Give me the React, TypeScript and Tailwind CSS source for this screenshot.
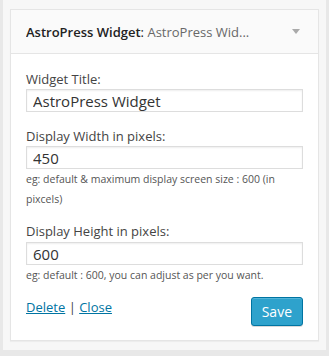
export default function App() {
  return (
    <div className="w-[329px] h-[356px] bg-[#e8e8e8] px-[3px] font-['Open_Sans',sans-serif] text-[#444]">
      <div className="h-[350px] bg-[#f7f7f7] px-[7px] pt-[9px]">
        <div className="border border-[#e5e5e5] bg-white shadow-[0_1px_1px_rgba(0,0,0,0.04)]">
          {/* header */}
          <div className="flex h-[44px] items-center justify-between border-b border-[#e5e5e5] bg-[#fafafa] pl-[15px] pr-[18px]">
            <h3 className="truncate text-[13px] leading-[20px] font-semibold text-[#222]">
              AstroPress Widget<span className="font-normal">:</span>{" "}
              <span className="font-normal text-[#686868]">AstroPress Wid...</span>
            </h3>
            <span className="h-0 w-0 border-x-[4px] border-t-[5px] border-x-transparent border-t-[#aaa]"></span>
          </div>

          {/* body */}
          <div className="px-[15px] pt-[16px] pb-[14px] text-[13px] leading-[18px]">
            <label className="block mb-[1px]">Widget Title:</label>
            <input
              className="block h-[23px] w-full border border-[#ddd] px-[6px] text-[15px] text-[#333] shadow-[inset_0_1px_2px_rgba(0,0,0,0.07)] outline-none"
              defaultValue="AstroPress Widget"
            />

            <label className="block mt-[15px] mb-[1px]">Display Width in pixels:</label>
            <input
              className="block h-[23px] w-full border border-[#ddd] px-[6px] text-[15px] text-[#333] shadow-[inset_0_1px_2px_rgba(0,0,0,0.07)] outline-none"
              defaultValue="450"
            />
            <p className="text-[10.5px] leading-[20px] text-[#555]">
              eg: default &amp; maximum display screen size : 600 (in pixcels)
            </p>

            <label className="block mt-[13px] mb-[2px]">Display Height in pixels:</label>
            <input
              className="block h-[23px] w-full border border-[#ddd] px-[6px] text-[15px] text-[#333] shadow-[inset_0_1px_2px_rgba(0,0,0,0.07)] outline-none"
              defaultValue="600"
            />
            <p className="text-[10.5px] leading-[20px] text-[#555]">
              eg: default : 600, you can adjust as per you want.
            </p>

            <div className="mt-[12px] flex items-start justify-between">
              <div className="pt-[1px] text-[13px] leading-[18px]">
                <a href="#" className="text-[#0074a2] underline">Delete</a>
                <span className="text-[#444]"> | </span>
                <a href="#" className="text-[#0074a2] underline">Close</a>
              </div>
              <button className="h-[29px] rounded-[3px] border border-[#0074a2] bg-[#2ea2cc] px-[10px] text-[14px] text-white shadow-[inset_0_1px_0_rgba(120,200,230,0.5),0_1px_0_rgba(0,0,0,0.15)]">
                Save
              </button>
            </div>
          </div>
        </div>
      </div>
    </div>
  );
}
